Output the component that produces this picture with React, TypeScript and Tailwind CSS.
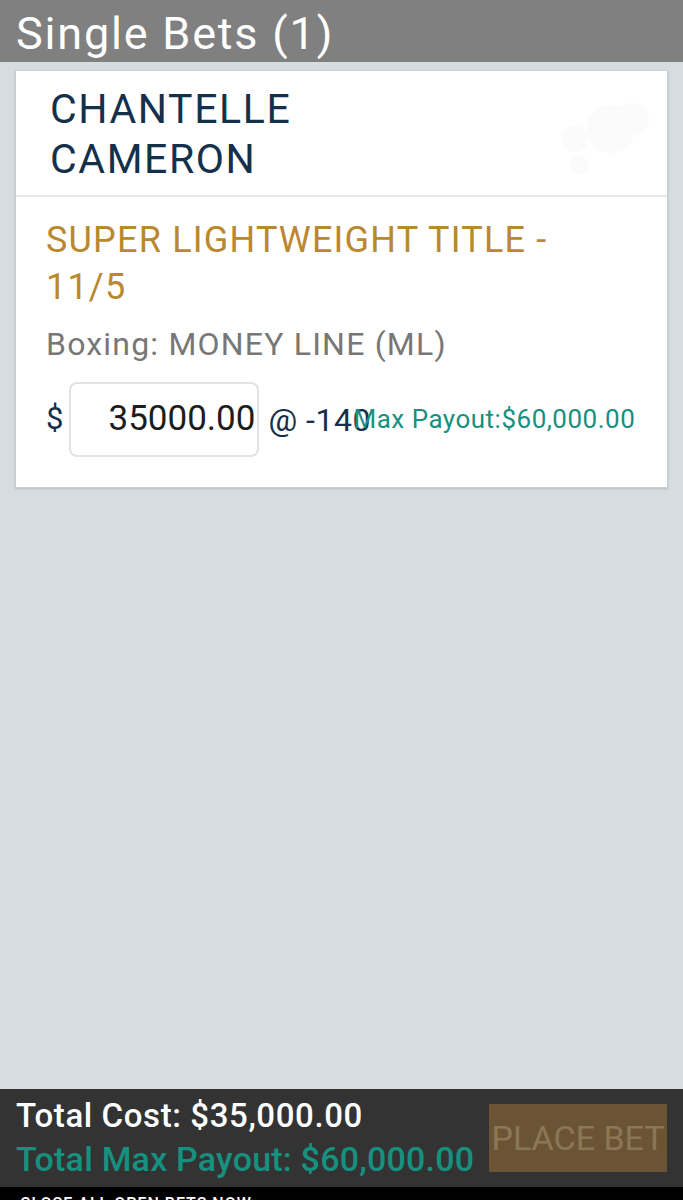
import React from "react";

const font = { fontFamily: "Roboto, 'Liberation Sans', sans-serif" };

const BetCard = () => {
  return (
    <div className="mx-[15px] mt-[8px] bg-white border border-[#c9d0d3] shadow-[0_1px_2px_rgba(0,0,0,0.15)]">
      {/* Selection name */}
      <div className="relative h-[126px] border-b-2 border-[#e4e8ea] pl-[34px] pt-[13px]">
        <div className="text-[41px] leading-[50px] tracking-[1.6px] text-[#14304b]">
          CHANTELLE
          <br />
          CAMERON
        </div>
        {/* faint watermark */}
        <svg
          className="absolute right-[8px] top-[26px]"
          width="110"
          height="80"
          viewBox="0 0 110 80"
        >
          <g fill="#fbfbfb">
            <circle cx="62" cy="32" r="24" />
            <circle cx="84" cy="22" r="16" />
            <circle cx="26" cy="42" r="13" />
            <circle cx="30" cy="68" r="9" />
          </g>
        </svg>
      </div>

      {/* Market details */}
      <div className="pl-[30px] pr-4 pt-[20px] pb-[30px]">
        <div className="text-[36px] leading-[47px] tracking-[1.2px] text-[#b9882f]">
          SUPER LIGHTWEIGHT TITLE -
          <br />
          11/5
        </div>
        <div className="mt-[13px] text-[32px] leading-[40px] tracking-[1.2px] text-[#777777]">
          Boxing: MONEY LINE (ML)
        </div>
        <div className="mt-[18px] flex items-center">
          <span className="text-[31px] text-[#14304b]">$</span>
          <div className="ml-[6px] flex h-[75px] w-[190px] items-center justify-end rounded-[8px] border-2 border-[#e2e2e2] pr-[2px]">
            <span className="text-[35px] text-[#1d1d1d]">35000.00</span>
          </div>
          <span className="ml-[9px] w-[85px] whitespace-nowrap text-[32px] tracking-[0.5px] text-[#14304b]">
            @ -140
          </span>
          <span className="whitespace-nowrap text-[26px] tracking-[0.5px] text-[#16917f]">
            Max Payout:$60,000.00
          </span>
        </div>
      </div>
    </div>
  );
};

export default function App() {
  return (
    <div style={font} className="flex h-[1200px] w-[683px] flex-col overflow-hidden bg-[#d5dde0]">
      {/* Header */}
      <div className="h-[62px] shrink-0 bg-[#808080] pl-[16px]">
        <h1 className="text-[45px] leading-[70px] tracking-[1.8px] text-white -mt-[1px]">Single Bets (1)</h1>
      </div>

      <div className="flex-1">
        <BetCard />
      </div>

      {/* Footer */}
      <div className="shrink-0 bg-[#333333]">
        <div className="flex items-center justify-between pl-[16px] pr-[16px] h-[98px]">
          <div>
            <div className="text-[33px] leading-[42px] font-medium tracking-[0.6px] text-white">
              Total Cost: $35,000.00
            </div>
            <div className="text-[34px] leading-[44px] font-medium tracking-[0.2px] text-[#16917f]">
              Total Max Payout: $60,000.00
            </div>
          </div>
          <button className="flex h-[68px] w-[178px] items-center justify-center bg-[#6b5433] text-[34px] text-[#8b7758]">
            PLACE BET
          </button>
        </div>
        <div className="h-[13px] overflow-hidden bg-black pl-[20px] pt-[9px]">
          <div className="text-[16px] leading-[16px] font-medium text-white tracking-[1px]">
            CLOSE ALL OPEN BETS NOW
          </div>
        </div>
      </div>
    </div>
  );
}
